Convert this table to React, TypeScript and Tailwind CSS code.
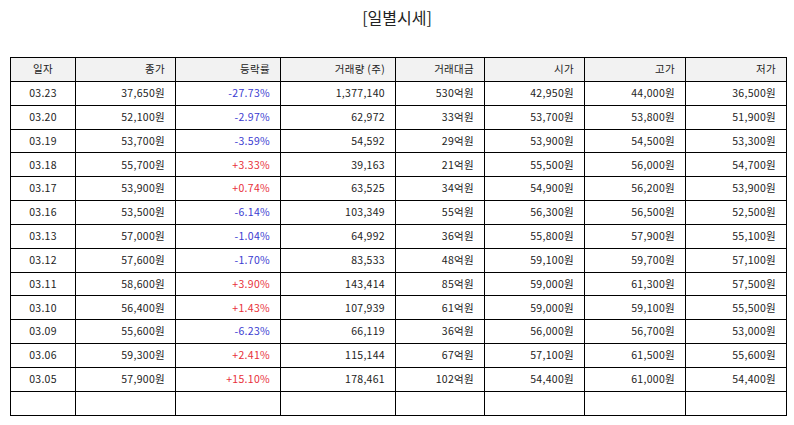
const columns = [
  { label: "일자", width: "w-[65px]", align: "text-center" },
  { label: "종가", width: "w-[100px]", align: "text-right" },
  { label: "등락률", width: "w-[105px]", align: "text-right" },
  { label: "거래량 (주)", width: "w-[115px]", align: "text-right" },
  { label: "거래대금", width: "w-[89px]", align: "text-right" },
  { label: "시가", width: "w-[100px]", align: "text-right" },
  { label: "고가", width: "w-[101px]", align: "text-right" },
  { label: "저가", width: "w-[101px]", align: "text-right" },
]

const rows = [
  ["03.23", "37,650원", "-27.73%", "1,377,140", "530억원", "42,950원", "44,000원", "36,500원"],
  ["03.20", "52,100원", "-2.97%", "62,972", "33억원", "53,700원", "53,800원", "51,900원"],
  ["03.19", "53,700원", "-3.59%", "54,592", "29억원", "53,900원", "54,500원", "53,300원"],
  ["03.18", "55,700원", "+3.33%", "39,163", "21억원", "55,500원", "56,000원", "54,700원"],
  ["03.17", "53,900원", "+0.74%", "63,525", "34억원", "54,900원", "56,200원", "53,900원"],
  ["03.16", "53,500원", "-6.14%", "103,349", "55억원", "56,300원", "56,500원", "52,500원"],
  ["03.13", "57,000원", "-1.04%", "64,992", "36억원", "55,800원", "57,900원", "55,100원"],
  ["03.12", "57,600원", "-1.70%", "83,533", "48억원", "59,100원", "59,700원", "57,100원"],
  ["03.11", "58,600원", "+3.90%", "143,414", "85억원", "59,000원", "61,300원", "57,500원"],
  ["03.10", "56,400원", "+1.43%", "107,939", "61억원", "59,000원", "59,100원", "55,500원"],
  ["03.09", "55,600원", "-6.23%", "66,119", "36억원", "56,000원", "56,700원", "53,000원"],
  ["03.06", "59,300원", "+2.41%", "115,144", "67억원", "57,100원", "61,500원", "55,600원"],
  ["03.05", "57,900원", "+15.10%", "178,461", "102억원", "54,400원", "61,000원", "54,400원"],
]

function rateColor(value: string) {
  if (value.startsWith("+")) return "text-[#e8303a]"
  if (value.startsWith("-")) return "text-[#3b3bd1]"
  return "text-[#333]"
}

export default function App() {
  return (
    <div className="w-[794px] h-[425px] bg-white font-['Noto_Sans_CJK_KR','Noto_Sans',sans-serif] text-[#222]">
      <h1 className="pt-[6px] text-center text-[16px] leading-[22px] text-[#222]">[일별시세]</h1>
      <table className="ml-[10px] mt-[29px] table-fixed border-collapse border border-black text-[10.5px] tracking-[0.3px]">
        <thead>
          <tr className="h-[23.85px] bg-[#f2f2f2]">
            {columns.map((col) => (
              <th
                key={col.label}
                className={`${col.width} ${col.align} border border-black px-[10px] font-normal leading-none`}
              >
                {col.label}
              </th>
            ))}
          </tr>
        </thead>
        <tbody>
          {rows.map((row) => (
            <tr key={row[0]} className="h-[23.85px]">
              {row.map((cell, i) => (
                <td
                  key={i}
                  className={`${columns[i].align} border border-black px-[10px] leading-none ${i === 2 ? rateColor(cell) : ""}`}
                >
                  {cell}
                </td>
              ))}
            </tr>
          ))}
          <tr className="h-[23.85px]">
            {columns.map((col) => (
              <td key={col.label} className="border border-black" />
            ))}
          </tr>
        </tbody>
      </table>
    </div>
  )
}
